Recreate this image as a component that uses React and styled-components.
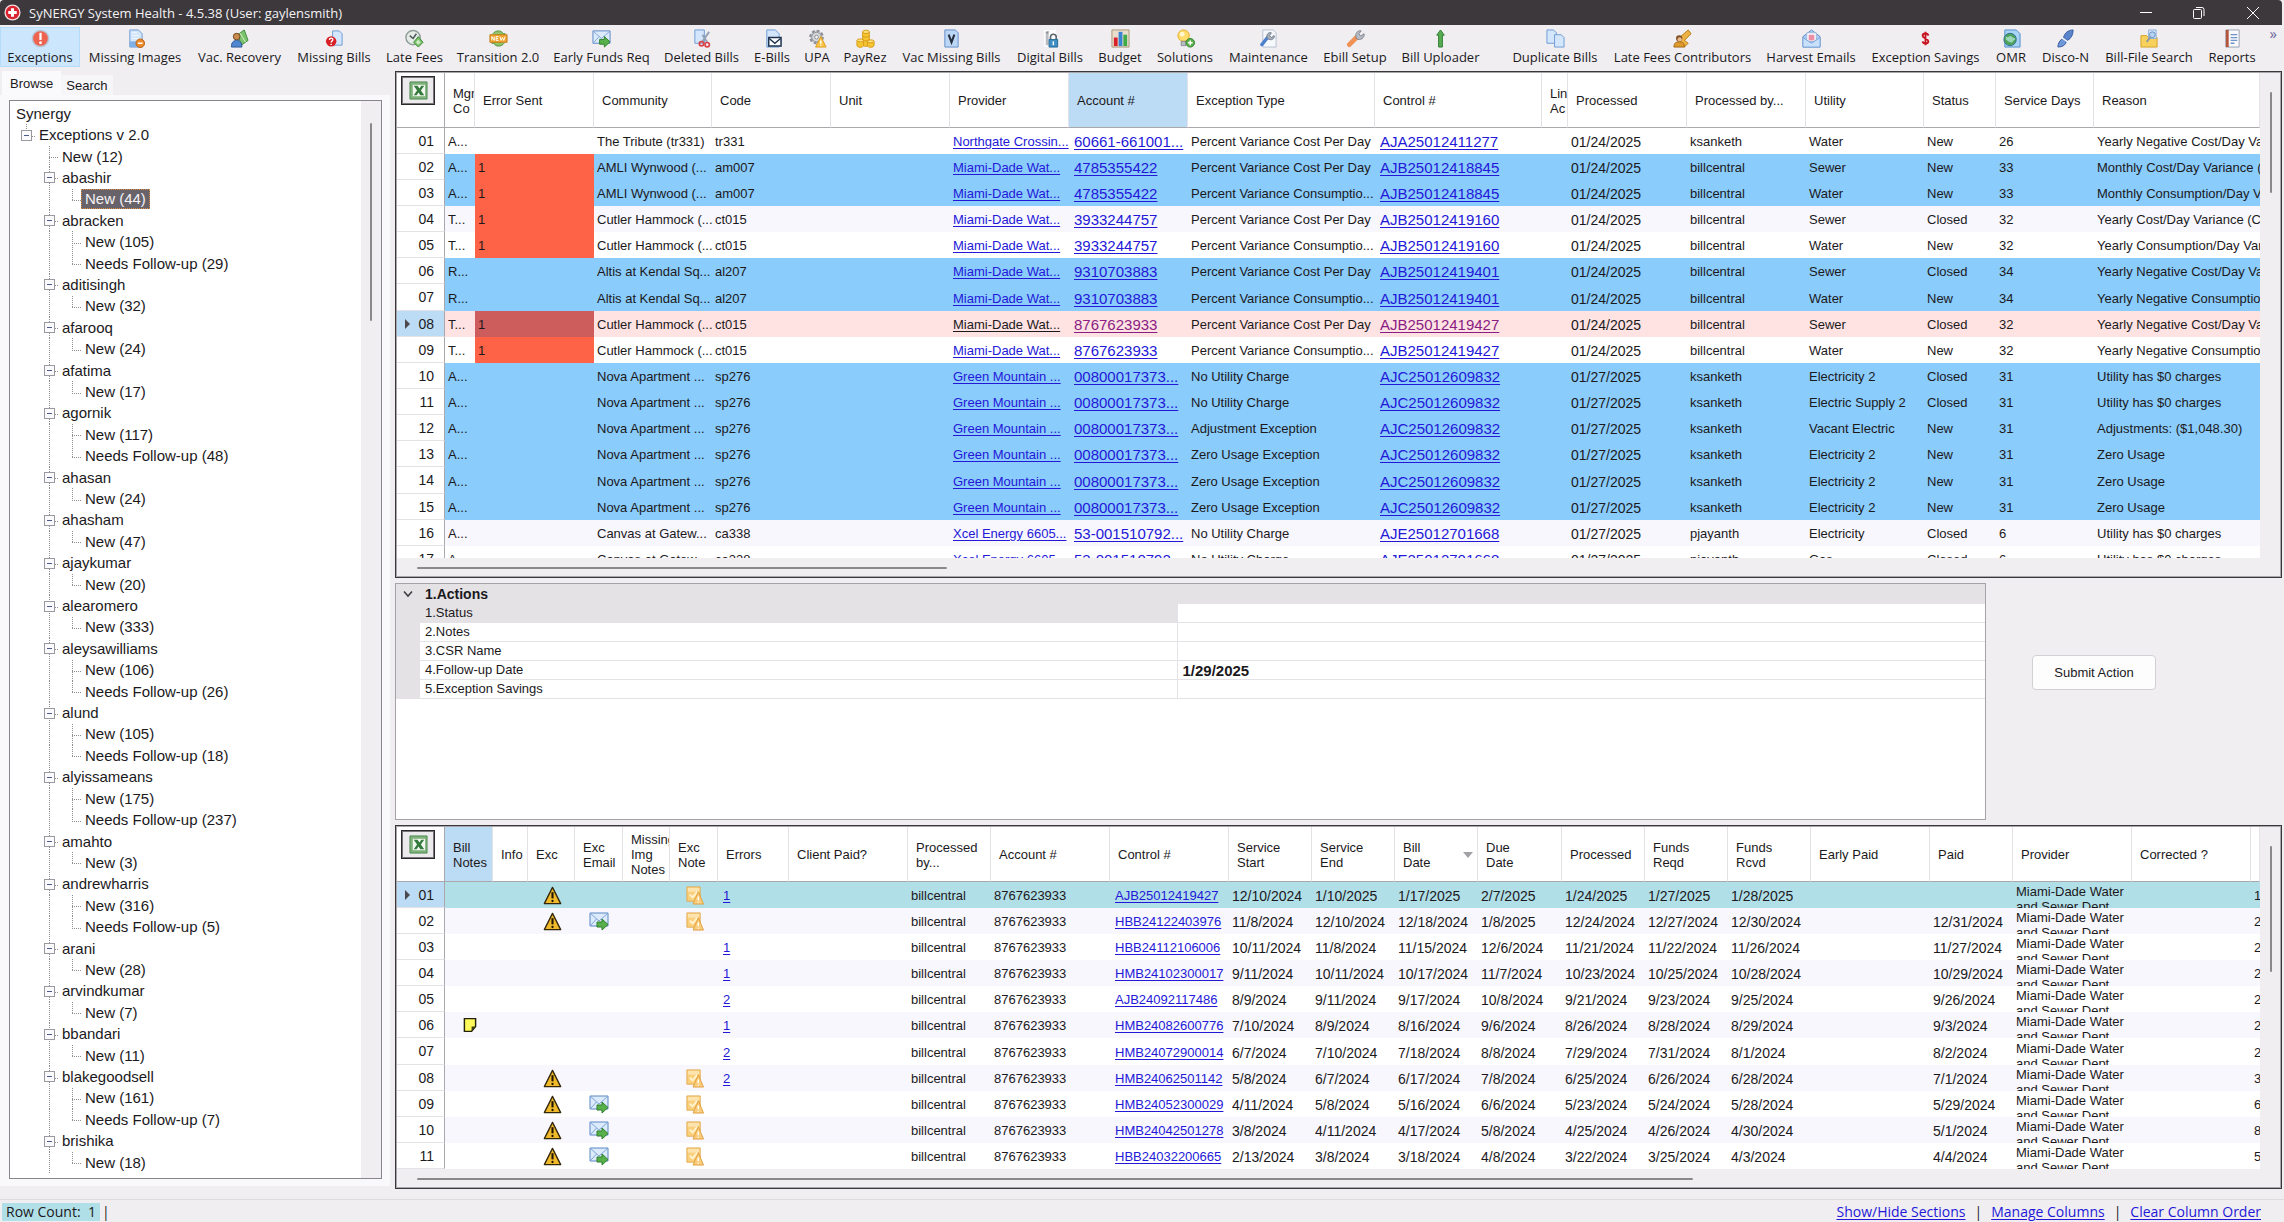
import React, { useState } from 'react';
import styled, { createGlobalStyle, css } from 'styled-components';

const sans = `"Liberation Sans", Arial, sans-serif`;
const ui = `"Open Sans", "Noto Sans", sans-serif`;

const c = {
  chrome: '#f0eef1',
  title: '#3c383c',
  line: '#e4e2e7',
  dark: '#39373a',
  thumb: '#8a888b',
  link: '#2318d8',
  visited: '#8a1c84',
  head: '#bcdbf4',
  sky: '#8accfb',
  pink: '#ffe3e2',
  tomato: '#ff6347',
  indian: '#cd5c5c',
  powder: '#b1dfe7',
  ghost: '#f8f7fd',
};

const GlobalStyle = createGlobalStyle`
  * { box-sizing: border-box; }
  body { margin: 0; background: ${c.chrome}; font-family: ${sans}; font-size: 13px; color: #1b191c; }
  button, input { font: inherit; color: inherit; }
`;

/* ---------- icons ---------- */

const page = (
  <path d="M4 1h9l4 4v14H4z" fill="#d3e6fb" stroke="#6d9bd3" />
);
const Ico = styled.svg.attrs({ viewBox: '0 0 20 20', 'aria-hidden': true })`
  display: block;
  width: ${p => p.$size || 19}px;
  height: ${p => p.$size || 19}px;
  flex: none;
`;
const Warn = () => (
  <g>
    <path d="M10 1.5 18.6 18.5H1.4z" fill="#f0b929" stroke="#33270a" strokeWidth="1.4" strokeLinejoin="round" />
    <path d="M10 6.5v6.5" stroke="#1d1606" strokeWidth="2.2" />
    <circle cx="10" cy="15.8" r="1.2" fill="#1d1606" />
  </g>
);
const MailArrow = () => (
  <g>
    <path d="M1 2h18v13H1z" fill="#dcebfb" stroke="#5b86c4" />
    <path d="M1.5 2.5 10 10l8.5-7.5M1.5 14.5 7.5 8M18.5 14.5 12.5 8" fill="none" stroke="#7fa5d8" />
    <path d="M8 11h5V8l6 5.5-6 5.5v-3H8z" fill="#58b04b" stroke="#2f7f2c" />
  </g>
);
const icons = {
  exceptions: (
    <g>
      <circle cx="10" cy="10" r="8.5" fill="#ee6350" stroke="#b9c3d0" strokeWidth="1.5" />
      <path d="M10 4v7.5" stroke="#fff" strokeWidth="2.4" />
      <circle cx="10" cy="14.5" r="1.5" fill="#fff" />
    </g>
  ),
  missingImages: (
    <g>
      {page}
      <path d="M4 13h13v6H4z" fill="#7fb0e8" />
      <path d="M6 4h6M6 7h8M6 10h8" stroke="#f2f8ff" />
      <circle cx="15" cy="15" r="4.5" fill="#ec8a2b" stroke="#b95f12" />
      <path d="M12.5 15h5" stroke="#fff" strokeWidth="1.6" />
    </g>
  ),
  recovery: (
    <g>
      <path d="M8 6 15 1l4 11-7 5z" fill="#7cc36e" stroke="#3f8a3c" />
      <path d="M10 3.5 16.5 14" stroke="#d8f0cf" />
      <circle cx="7" cy="8" r="3.5" fill="#c98b4d" stroke="#6d4520" />
      <path d="M1.5 19c0-5 2-7 5.5-7s5.5 2 5.5 7z" fill="#4f86cf" stroke="#2c5796" />
    </g>
  ),
  missingBills: (
    <g>
      <path d="M8 2h7l3 3v12H8z" fill="#d3e6fb" stroke="#6d9bd3" />
      <circle cx="6.5" cy="13" r="5.5" fill="#d81f26" />
      <path d="M4.8 11.5c0-2.600 3.600-2.400 3.400 0-.2 1.300-1.700 1.300-1.700 2.700M6.500 15.500v1.300" fill="none" stroke="#fff" strokeWidth="1.5" />
    </g>
  ),
  lateFees: (
    <g>
      <circle cx="8.5" cy="9" r="7.5" fill="#e5ece8" stroke="#8f9d97" strokeWidth="1.5" />
      <path d="M5 7l3.5 3L12 5" fill="none" stroke="#4a5652" strokeWidth="1.5" />
      <path d="m14 8 5 6-5 5-5-5z" fill="#79c06b" stroke="#3f8a3c" />
      <path d="m14 11 2.5 3-2.500 2.500L11.500 14z" fill="#cdeac5" />
    </g>
  ),
  transition: (
    <g>
      <path d="M4 5c3-4 9-4 11 0h2l-3.5 4M16 15c-3 4-9 4-11 0H3l3.5-4" fill="#8fc46a" stroke="#4e8f35" />
      <path d="M1 6h18v8H1z" fill="#f2a531" stroke="#c27a15" />
      <path d="M3 12V8l2.5 4V8M7.5 8v4H10M7.5 8H10M7.500 10h2M11.500 8l1.200 4L14.200 9l1.300 3L17 8" fill="none" stroke="#fff" />
    </g>
  ),
  mailArrow: <MailArrow />,
  deleted: (
    <g>
      <path d="M3 1h10v14H3z" fill="#d3e6fb" stroke="#6d9bd3" />
      <path d="m18 3-7 10M11 6l5 8" stroke="#93a2b5" strokeWidth="2" />
      <circle cx="10" cy="15.5" r="2.3" fill="none" stroke="#d8434a" strokeWidth="1.8" />
      <circle cx="16" cy="16.5" r="2.3" fill="none" stroke="#d8434a" strokeWidth="1.8" />
    </g>
  ),
  ebills: (
    <g>
      {page}
      <path d="M6 9h13v9H6z" fill="#fff" stroke="#1f3350" strokeWidth="1.6" />
      <path d="m6.5 10 6 5 6-5" fill="none" stroke="#1f3350" strokeWidth="1.5" />
    </g>
  ),
  upa: (
    <g>
      <circle cx="9" cy="8.5" r="6.5" fill="#c9ccd0" stroke="#8d9197" strokeWidth="2.4" strokeDasharray="3 2" />
      <circle cx="9" cy="8.5" r="5" fill="#d5d7da" stroke="#92969b" />
      <circle cx="9" cy="8.5" r="2" fill="#f3f2f4" stroke="#8d9197" />
      <path d="m13.5 8 5.5 11H8z" fill="#fbc748" stroke="#de9a17" />
      <path d="M13.5 12v3.5M13.5 16.5v1.200" stroke="#fff" strokeWidth="1.5" />
    </g>
  ),
  payrez: (
    <g fill="#f6c532" stroke="#d59a17">
      <path d="M7 3v13c0 3 7 3 7 0V3z" />
      <ellipse cx="10.5" cy="3" rx="3.5" ry="1.8" fill="#ffe27a" />
      <path d="M1 12v5c0 3 7 3 7 0v-5z" />
      <ellipse cx="4.5" cy="12" rx="3.5" ry="1.6" fill="#ffe27a" />
      <path d="M12 13v4c0 3 7 3 7 0v-4z" />
      <ellipse cx="15.5" cy="13" rx="3.5" ry="1.6" fill="#ffe27a" />
      <path d="M7 7c0 2 7 2 7 0M7 11c0 2 7 2 7 0" fill="none" />
    </g>
  ),
  vac: (
    <g>
      <path d="M3 1h11l3 3v15H3z" fill="#bcd6f5" stroke="#5f8cc9" />
      <path d="m7 6 3 8 3-8" fill="none" stroke="#262f3d" strokeWidth="2.2" />
    </g>
  ),
  digital: (
    <g>
      <path d="M3 1h13v18H3z" fill="#fbfbfc" />
      <path d="M5 5h3v12H5z" fill="#b9bcc1" />
      <path d="M5 3l3-1v3H5z" fill="#8e9298" />
      <path d="M10 11V8.5c0-4 6-4 6 0V11" fill="none" stroke="#5d656f" strokeWidth="1.7" />
      <path d="M8.5 11h9v8h-9z" fill="#3f8fc4" stroke="#226896" />
      <path d="M13 13v4" stroke="#fff" strokeWidth="1.5" />
    </g>
  ),
  budget: (
    <g>
      <path d="M1 1h18v18H1z" fill="#e9ddcb" stroke="#ac9576" />
      <path d="M3 9h4v9H3z" fill="#d9212c" />
      <path d="M8 3h4v15H8z" fill="#3a83d3" />
      <path d="M13 6h4v12h-4z" fill="#3faa4a" />
    </g>
  ),
  solutions: (
    <g>
      <circle cx="8" cy="7" r="6" fill="#ffdc6b" stroke="#e5a927" />
      <circle cx="6.5" cy="5.5" r="2.5" fill="#fff6cf" />
      <path d="M5.5 13h5v4.5h-5z" fill="#b9bdc3" stroke="#868b92" />
      <circle cx="15" cy="14.5" r="4.5" fill="#5bb04c" stroke="#2f7f2c" />
      <path d="M15 12v5M12.5 14.5h5" stroke="#fff" strokeWidth="1.6" />
    </g>
  ),
  maintenance: (
    <g>
      <path d="M4 1h11l3 3v15H4z" fill="#f6f8fc" stroke="#b5bfd1" />
      <path d="M3 16.500 9 9" stroke="#4f80cd" strokeWidth="3.6" strokeLinecap="round" />
      <path d="M9 10c-2-4 1-7 4-6l-2 3 2 2 3-2c1 3-3 6-7 3z" fill="#a8b0bc" stroke="#727c8b" />
    </g>
  ),
  ebill: (
    <g>
      <path d="M3.5 16.5 11 9" stroke="#f09255" strokeWidth="5" strokeLinecap="round" />
      <path d="M11 10c-2-5 1-9 5-8l-2.5 3 2 2.5L19 5c1 4-4 8-8 5z" fill="#b7bcc4" stroke="#7d838d" />
    </g>
  ),
  uploader: (
    <path d="M10 1l4 5.5h-2V19H8V6.5H6z" fill="#59ad50" stroke="#2d7c31" />
  ),
  duplicate: (
    <g fill="#d3e6fb" stroke="#6d9bd3">
      <path d="M1 1h7l3 3v11H1z" />
      <path d="M9 6h7l3 3v10H9z" />
    </g>
  ),
  contributors: (
    <g>
      <path d="M8 8 16 1l3 4-7 7 4 3-4 4-5-4z" fill="#edb242" stroke="#b57c14" />
      <circle cx="6.5" cy="10" r="3.3" fill="#7b4e28" />
      <circle cx="7" cy="11" r="2.3" fill="#e8b98c" />
      <path d="M1 19c0-4 2-5.5 5.5-5.5S12 15 12 19z" fill="#df9a2d" stroke="#9f6512" />
    </g>
  ),
  harvest: (
    <g>
      <path d="M1 8 10 1l9 7v11H1z" fill="#a9cdf6" stroke="#5f8cc9" />
      <path d="M5 4h10v9H5z" fill="#fff" stroke="#9cb4d6" />
      <path d="M7 6h6v6H7z" fill="#ea8fa6" />
      <path d="m1 9 9 6 9-6v10H1z" fill="#c9e0fa" stroke="#7aa3da" />
    </g>
  ),
  savings: (
    <path d="M13 7c-.5-3-6-3-6 0s6 3 6 6-5.5 3.200-6 0M10 3v14" fill="none" stroke="#c81420" strokeWidth="2" />
  ),
  omr: (
    <g>
      <path d="M3 1h12l4 4v14H3z" fill="#a9d4f5" stroke="#4f8ccb" />
      <circle cx="8.5" cy="11" r="6.5" fill="#4fa35a" stroke="#2e6f8f" />
      <path d="M4 8c3 2 4-2 6 0s4 1 4 3c-3 1-2 4-5 3s-3-2-5-3z" fill="#9ad6b8" />
    </g>
  ),
  disco: (
    <g>
      <path d="M18 1c-5 0-9 3-10 8l4 3c4-2 6-6 6-11z" fill="#5a84cc" stroke="#33589e" />
      <path d="M2 19c5 0 8-2 9-6l-4-3c-3 2-5 5-5 9z" fill="#6f97da" stroke="#33589e" />
      <path d="m6 9 7 5" stroke="#eef2fa" strokeWidth="1.5" />
    </g>
  ),
  search: (
    <g>
      <path d="M1 7h6l2 2h9v10H1z" fill="#f8d15c" stroke="#d5a023" />
      <path d="M9 1h8v9H9z" fill="#d3e6fb" stroke="#8dafdc" />
      <circle cx="13" cy="6" r="3" fill="#b7d5f5" stroke="#6b8bb6" />
      <path d="m11 8.5-4 5" stroke="#8c97a8" strokeWidth="2" />
    </g>
  ),
  reports: (
    <g>
      <path d="M3 1h14v18H3z" fill="#f8f8fb" stroke="#96a0b3" />
      <path d="M3 1h3v18H3z" fill="#b3553d" />
      <path d="M8 6h7M8 9h7M8 12h7M8 15h4" stroke="#6f94c9" strokeWidth="1.4" />
    </g>
  ),
};

const ExcelIcon = () => (
  <Ico $size={19}>
    <path d="M1 1h18v18H1z" fill="#7fb27c" stroke="#4c8a4f" />
    <path d="M4 4h13v12H4z" fill="#f1f6ee" />
    <path d="M5 5h4l2 3 2-3h3l-3.500 5L16 15h-4l-2-3-2 3H5l3.500-5z" fill="#357a3d" />
  </Ico>
);
const ExcNoteIcon = () => (
  <Ico $size={19}>
    <path d="M2 1h14v15H2z" fill="#fbd07c" stroke="#e3aa50" />
    <path d="M3 2h12v4H3z" fill="#fde3ae" />
    <path d="M5 9l3 3 5-6" fill="none" stroke="#fff3d0" strokeWidth="2" />
    <path d="m14 6 5.500 13H8.500z" fill="#f9cd7c" stroke="#e0a03f" />
    <path d="M14 11v4M14 16.500v1.200" stroke="#fff" strokeWidth="1.4" />
  </Ico>
);
const BillNoteIcon = () => (
  <Ico $size={16}>
    <path d="M3 2h14v10l-5 6H3z" fill="#fdf95a" stroke="#23220c" strokeWidth="1.8" />
    <path d="M12 18v-6h5z" fill="#3d3b17" />
  </Ico>
);

/* ---------- frame ---------- */

const Window = styled.div`
  display: flex;
  flex-direction: column;
  height: 100vh;
  min-width: 1200px;
  overflow: hidden;
`;
const TitleBar = styled.header`
  display: flex;
  align-items: center;
  height: 25px;
  padding: 0 2px 0 4px;
  margin-right: 2px;
  background: ${c.title};
  border-radius: 4px 4px 0 0;
  color: #f4f2f5;
  font-family: ${ui};
`;
const AppTitle = styled.h1`
  flex: 1;
  margin: 0 0 0 8px;
  font-size: 13px;
  font-weight: 400;
  line-height: 24px;
`;
const WinButton = styled.button`
  display: flex;
  align-items: center;
  justify-content: center;
  width: 54px;
  height: 22px;
  padding: 0;
  border: 0;
  background: none;
`;
const ToolBar = styled.nav`
  display: flex;
  height: 46px;
  padding: 2px 0 4px;
  overflow: hidden;
  font-family: ${ui};
`;
const Tool = styled.button`
  display: flex;
  flex-direction: column;
  align-items: center;
  flex: none;
  width: ${p => p.$w}px;
  margin-left: ${p => (p.$apart ? 17 : 0)}px;
  padding: 1px 0 0;
  border: 1px solid ${p => (p.$on ? '#b5dcfb' : 'transparent')};
  background: ${p => (p.$on ? '#cce6fd' : 'none')};
  font-size: 13px;
  line-height: 18px;
  white-space: nowrap;
`;
const More = styled.button`
  align-self: flex-start;
  margin-left: auto;
  padding: 0 7px 0 0;
  border: 0;
  background: none;
  color: #6c6799;
  font-size: 15px;
  line-height: 12px;
`;
const Main = styled.main`
  flex: 1;
  min-height: 0;
  display: grid;
  grid-template-columns: 390px 1fr;
  gap: 5px;
  padding-right: 2px;
`;

/* ---------- tree ---------- */

const Side = styled.aside`
  display: flex;
  flex-direction: column;
  min-height: 0;
  padding-bottom: 13px;
`;
const Tabs = styled.div`
  display: flex;
  align-items: flex-end;
  height: 24px;
  padding-left: 2px;
`;
const Tab = styled.button`
  height: ${p => (p.$on ? 24 : 20)}px;
  padding: 0 ${p => (p.$on ? 8 : 5)}px;
  border: 0;
  background: ${p => (p.$on ? '#faf9fb' : '#f6f5f8')};
  font-size: 13px;
`;
const TabPage = styled.div`
  flex: 1;
  min-height: 0;
  display: flex;
  padding: 5px 8px 7px 9px;
  background: #f9f8fb;
`;
const TreeBox = styled.div`
  flex: 1;
  display: flex;
  border: 1px solid #87858b;
  background: #fff;
`;
const TreeList = styled.ul`
  flex: 1;
  display: flex;
  flex-direction: column;
  margin: 0;
  padding: 2px 0 5px 5px;
  list-style: none;
  font-size: 15px;
`;
const TreeRow = styled.li`
  flex: 1;
  display: flex;
  align-items: center;
  min-height: 0;
`;
const dotsY = 'repeating-linear-gradient(#8f8d92 0 1px, transparent 1px 2px)';
const dotsX = 'repeating-linear-gradient(90deg, #8f8d92 0 1px, transparent 1px 2px)';
const Rail = styled.span`
  display: flex;
  align-items: center;
  align-self: stretch;
  width: 23px;
  padding-left: 6px;
  background-repeat: no-repeat;
  ${p => p.$kind === 'through' && css`
    background-image: ${dotsY};
    background-size: 1px 100%;
    background-position: 11px 0;
  `}
  ${p => p.$kind === 'branch' && css`
    background-image: ${dotsY}, ${dotsX};
    background-size: 1px 100%, 10px 1px;
    background-position: 11px 0, 11px 55%;
  `}
  ${p => p.$kind === 'corner' && css`
    background-image: ${dotsY}, ${dotsX};
    background-size: 1px 55%, 10px 1px;
    background-position: 11px 0, 11px 55%;
  `}
`;
const Toggle = styled.button`
  display: flex;
  align-items: center;
  justify-content: center;
  width: 11px;
  height: 11px;
  padding: 0;
  border: 1px solid #9b99a0;
  background: #fbfbfd;
  &::before {
    content: '';
    width: 5px;
    height: 1px;
    background: #4d5a8c;
  }
`;
const NodeLabel = styled.span`
  margin-left: -3px;
  padding: 0 3px;
  border: 1px ${p => (p.$on ? 'dotted #d98d45' : 'solid transparent')};
  background: ${p => (p.$on ? '#68636b' : 'none')};
  color: ${p => (p.$on ? '#f5f3f6' : 'inherit')};
  line-height: 18px;
  white-space: nowrap;
`;
const TreeTrack = styled.div`
  display: flex;
  justify-content: center;
  width: 20px;
  padding-top: 22px;
  background: ${c.chrome};
`;

const users = [
  ['abashir', 44], ['abracken', 105, 29], ['aditisingh', 32], ['afarooq', 24], ['afatima', 17],
  ['agornik', 117, 48], ['ahasan', 24], ['ahasham', 47], ['ajaykumar', 20], ['alearomero', 333],
  ['aleysawilliams', 106, 26], ['alund', 105, 18], ['alyissameans', 175, 237], ['amahto', 3],
  ['andrewharris', 316, 5], ['arani', 28], ['arvindkumar', 7], ['bbandari', 11],
  ['blakegoodsell', 161, 7], ['brishika', 18],
];

const Tree = () => {
  const [picked, setPicked] = useState('abashir-new');
  return (
    <TreeList>
      <TreeRow><NodeLabel>Synergy</NodeLabel></TreeRow>
      <TreeRow>
        <Rail $kind="corner"><Toggle aria-label="Collapse Exceptions v 2.0" /></Rail>
        <NodeLabel>Exceptions v 2.0</NodeLabel>
      </TreeRow>
      <TreeRow><Rail /><Rail $kind="branch" /><NodeLabel>New (12)</NodeLabel></TreeRow>
      {users.map(([name, fresh, follow]) => (
        <React.Fragment key={name}>
          <TreeRow>
            <Rail />
            <Rail $kind="branch"><Toggle aria-label={`Collapse ${name}`} /></Rail>
            <NodeLabel>{name}</NodeLabel>
          </TreeRow>
          <TreeRow onClick={() => setPicked(`${name}-new`)}>
            <Rail />
            <Rail $kind="through" />
            <Rail $kind={follow ? 'branch' : 'corner'} />
            <NodeLabel $on={picked === `${name}-new`}>New ({fresh})</NodeLabel>
          </TreeRow>
          {follow && (
            <TreeRow onClick={() => setPicked(`${name}-follow`)}>
              <Rail />
              <Rail $kind="through" />
              <Rail $kind="corner" />
              <NodeLabel $on={picked === `${name}-follow`}>Needs Follow-up ({follow})</NodeLabel>
            </TreeRow>
          )}
        </React.Fragment>
      ))}
    </TreeList>
  );
};

/* ---------- grids ---------- */

const Content = styled.section`
  display: grid;
  grid-template-rows: 507fr 237fr 364fr;
  gap: 5px;
  min-width: 0;
  min-height: 0;
  padding-bottom: 10px;
`;
const Panel = styled.div`
  display: grid;
  grid-template-columns: minmax(0, 1fr) 21px;
  grid-template-rows: minmax(0, 1fr) 19px;
  min-height: 0;
  border: 1px solid ${c.dark};
  outline: 1px solid #a9a7ab;
  outline-offset: -2px;
  background: ${c.chrome};
`;
const VTrack = styled.div`
  display: flex;
  justify-content: center;
  padding-top: 20px;
  background: ${c.chrome};
`;
const HTrack = styled.div`
  display: flex;
  align-items: center;
  padding-left: 21px;
`;
const Thumb = styled.div`
  width: ${p => p.$w || 2}px;
  height: ${p => p.$h || 2}px;
  border-radius: 1px;
  background: ${c.thumb};
`;
const Viewport = styled.div`
  overflow: hidden;
  background: #fff;
`;
const Table = styled.table`
  width: 100%;
  table-layout: fixed;
  border-collapse: separate;
  border-spacing: 0;
`;
const Th = styled.th`
  height: 56px;
  padding: 2px 0 0 8px;
  overflow: hidden;
  border-right: 1px solid ${c.line};
  border-bottom: 1px solid #aaa8ad;
  background: ${p => (p.$on ? c.head : '#fff')};
  font-weight: 400;
  line-height: 15px;
  text-align: left;
  white-space: pre;
`;
const Corner = styled.th`
  height: 56px;
  padding: 4px 0 0 5px;
  border-right: 1px solid #aaa8ad;
  border-bottom: 1px solid #aaa8ad;
  vertical-align: top;
`;
const ExcelButton = styled.button`
  display: flex;
  align-items: center;
  justify-content: center;
  width: 34px;
  height: 29px;
  padding: 0;
  border: 1px solid #2b292c;
  outline: 1px solid #77757a;
  outline-offset: -2px;
  background: #eceaed;
`;
const SortHead = styled.span`
  display: flex;
  align-items: center;
  justify-content: space-between;
  padding-right: 4px;
`;
const SortMark = styled.span`
  border: 5px solid transparent;
  border-top: 6px solid #a3a1a6;
  border-bottom: 0;
`;
const Tr = styled.tr`
  height: 26px;
  background: ${p => p.$bg};
  &:nth-child(7n) { height: 27px; }
`;
const RowHead = styled.th`
  padding: 0 10px 0 0;
  border-right: 1px solid #aaa8ad;
  border-bottom: 1px solid ${c.line};
  background: ${p => (p.$on ? c.head : '#fff')};
  font-size: 14px;
  font-weight: 400;
  line-height: 24px;
`;
const RowHeadInner = styled.span`
  display: flex;
  align-items: center;
  justify-content: flex-end;
  gap: 8px;
`;
const Pointer = styled.span`
  border: 5px solid transparent;
  border-left: 5px solid #4b494d;
  border-right: 0;
`;
const Td = styled.td`
  padding: 2px 0 0 ${p => p.$pad || 3}px;
  overflow: hidden;
  background: ${p => p.$bg || 'transparent'};
  font-size: ${p => p.$fs || 13}px;
  line-height: 24px;
  white-space: nowrap;
`;
const IconTd = styled.td`
  padding: 0 0 0 ${p => p.$pad || 14}px;
`;
const WrapCell = styled.div`
  height: 24px;
  overflow: hidden;
  line-height: 15px;
  white-space: pre;
`;
const GridLink = styled.a`
  color: ${p => p.$color || c.link};
  text-decoration: underline;
  text-underline-offset: 2px;
`;

const Cols = ({ widths }) => (
  <colgroup>
    {widths.map((w, i) => <col key={i} width={w} />)}
    <col />
  </colgroup>
);
const RowNumber = ({ n, on }) => (
  <RowHead scope="row" $on={on}>
    <RowHeadInner>{on && <Pointer />}{String(n).padStart(2, '0')}</RowHeadInner>
  </RowHead>
);
const ExcelCorner = () => (
  <Corner><ExcelButton aria-label="Export to Excel"><ExcelIcon /></ExcelButton></Corner>
);

const topCols = [49, 30, 119, 118, 119, 119, 119, 119, 187, 167, 26, 119, 119, 118, 72, 98];
const topHeads = [
  'Mgmt\nCo', 'Error Sent', 'Community', 'Code', 'Unit', 'Provider', 'Account #', 'Exception Type',
  'Control #', 'Lin\nAc', 'Processed', 'Processed by...', 'Utility', 'Status', 'Service Days', 'Reason',
];
const MD = 'Miami-Dade Wat...';
const GM = 'Green Mountain ...';
const CPD = 'Percent Variance Cost Per Day';
const CON = 'Percent Variance Consumptio...';
const BC = 'billcentral';
// tone, company, error, community, code, provider, account, type, control, day, by, utility, status, days, reason
const topRows = [
  ['', 'A...', '', 'The Tribute (tr331)', 'tr331', 'Northgate Crossin...', '60661-661001...', CPD, 'AJA25012411277', 24, 'ksanketh', 'Water', 'New', 26, 'Yearly Negative Cost/Day Variance'],
  ['sky', 'A...', 1, 'AMLI Wynwood (...', 'am007', MD, '4785355422', CPD, 'AJB25012418845', 24, BC, 'Sewer', 'New', 33, 'Monthly Cost/Day Variance (CY'],
  ['sky', 'A...', 1, 'AMLI Wynwood (...', 'am007', MD, '4785355422', CON, 'AJB25012418845', 24, BC, 'Water', 'New', 33, 'Monthly Consumption/Day Variance'],
  ['', 'T...', 1, 'Cutler Hammock (...', 'ct015', MD, '3933244757', CPD, 'AJB25012419160', 24, BC, 'Sewer', 'Closed', 32, 'Yearly Cost/Day Variance (CY'],
  ['', 'T...', 1, 'Cutler Hammock (...', 'ct015', MD, '3933244757', CON, 'AJB25012419160', 24, BC, 'Water', 'New', 32, 'Yearly Consumption/Day Variance'],
  ['sky', 'R...', '', 'Altis at Kendal Sq...', 'al207', MD, '9310703883', CPD, 'AJB25012419401', 24, BC, 'Sewer', 'Closed', 34, 'Yearly Negative Cost/Day Variance'],
  ['sky', 'R...', '', 'Altis at Kendal Sq...', 'al207', MD, '9310703883', CON, 'AJB25012419401', 24, BC, 'Water', 'New', 34, 'Yearly Negative Consumption/Day'],
  ['pink', 'T...', 1, 'Cutler Hammock (...', 'ct015', MD, '8767623933', CPD, 'AJB25012419427', 24, BC, 'Sewer', 'Closed', 32, 'Yearly Negative Cost/Day Variance'],
  ['', 'T...', 1, 'Cutler Hammock (...', 'ct015', MD, '8767623933', CON, 'AJB25012419427', 24, BC, 'Water', 'New', 32, 'Yearly Negative Consumption/Day'],
  ['sky', 'A...', '', 'Nova Apartment ...', 'sp276', GM, '00800017373...', 'No Utility Charge', 'AJC25012609832', 27, 'ksanketh', 'Electricity 2', 'Closed', 31, 'Utility has $0 charges'],
  ['sky', 'A...', '', 'Nova Apartment ...', 'sp276', GM, '00800017373...', 'No Utility Charge', 'AJC25012609832', 27, 'ksanketh', 'Electric Supply 2', 'Closed', 31, 'Utility has $0 charges'],
  ['sky', 'A...', '', 'Nova Apartment ...', 'sp276', GM, '00800017373...', 'Adjustment Exception', 'AJC25012609832', 27, 'ksanketh', 'Vacant Electric', 'New', 31, 'Adjustments: ($1,048.30)'],
  ['sky', 'A...', '', 'Nova Apartment ...', 'sp276', GM, '00800017373...', 'Zero Usage Exception', 'AJC25012609832', 27, 'ksanketh', 'Electricity 2', 'New', 31, 'Zero Usage'],
  ['sky', 'A...', '', 'Nova Apartment ...', 'sp276', GM, '00800017373...', 'Zero Usage Exception', 'AJC25012609832', 27, 'ksanketh', 'Electricity 2', 'New', 31, 'Zero Usage'],
  ['sky', 'A...', '', 'Nova Apartment ...', 'sp276', GM, '00800017373...', 'Zero Usage Exception', 'AJC25012609832', 27, 'ksanketh', 'Electricity 2', 'New', 31, 'Zero Usage'],
  ['', 'A...', '', 'Canvas at Gatew...', 'ca338', 'Xcel Energy 6605...', '53-001510792...', 'No Utility Charge', 'AJE25012701668', 27, 'pjayanth', 'Electricity', 'Closed', 6, 'Utility has $0 charges'],
  ['', 'A...', '', 'Canvas at Gatew...', 'ca338', 'Xcel Energy 6605...', '53-001510792...', 'No Utility Charge', 'AJE25012701668', 27, 'pjayanth', 'Gas', 'Closed', 6, 'Utility has $0 charges'],
];

const ExceptionGrid = () => (
  <Panel>
    <Viewport>
      <Table>
        <Cols widths={topCols} />
        <thead>
          <tr>
            <ExcelCorner />
            {topHeads.map(h => <Th key={h} $on={h === 'Account #'}>{h}</Th>)}
          </tr>
        </thead>
        <tbody>
          {topRows.map((r, i) => {
            const [tone, co, err, community, code, provider, account, type, control, day, by, utility, status, days, reason] = r;
            const on = tone === 'pink';
            const errBg = err ? (on ? c.indian : c.tomato) : undefined;
            return (
              <Tr key={i} $bg={tone ? c[tone] : i % 2 ? c.ghost : '#fff'}>
                <RowNumber n={i + 1} on={on} />
                <Td>{co}</Td>
                <Td $bg={errBg}>{err}</Td>
                <Td>{community}</Td>
                <Td>{code}</Td>
                <Td />
                <Td><GridLink href="#provider" $color={on && '#1b191c'}>{provider}</GridLink></Td>
                <Td $fs={15} $pad={5}><GridLink href="#account" $color={on && c.visited}>{account}</GridLink></Td>
                <Td>{type}</Td>
                <Td $fs={15} $pad={5}><GridLink href="#control" $color={on && c.visited}>{control}</GridLink></Td>
                <Td />
                <Td $fs={14}>01/{day}/2025</Td>
                <Td>{by}</Td>
                <Td>{utility}</Td>
                <Td>{status}</Td>
                <Td>{days}</Td>
                <Td>{reason}</Td>
              </Tr>
            );
          })}
        </tbody>
      </Table>
    </Viewport>
    <VTrack><Thumb $h={101} /></VTrack>
    <HTrack><Thumb $w={530} /></HTrack>
  </Panel>
);

const billCols = [49, 48, 35, 47, 48, 47, 48, 71, 119, 83, 119, 119, 83, 83, 83, 84, 83, 83, 83, 119, 83, 119, 119];
const billHeads = [
  'Bill\nNotes', 'Info', 'Exc', 'Exc\nEmail', 'Missing\nImg\nNotes', 'Exc\nNote', 'Errors', 'Client Paid?',
  'Processed\nby...', 'Account #', 'Control #', 'Service\nStart', 'Service\nEnd', 'Bill\nDate', 'Due\nDate',
  'Processed', 'Funds\nReqd', 'Funds\nRcvd', 'Early Paid', 'Paid', 'Provider', 'Corrected ?', ' ',
];
// flags: w warning, m mail, n note, b bill note
const billRows = [
  ['wn', 1, 'AJB25012419427', '12/10/2024', '1/10/2025', '1/17/2025', '2/7/2025', '1/24/2025', '1/27/2025', '1/28/2025', '', 1],
  ['wmn', '', 'HBB24122403976', '11/8/2024', '12/10/2024', '12/18/2024', '1/8/2025', '12/24/2024', '12/27/2024', '12/30/2024', '12/31/2024', 2],
  ['', 1, 'HBB24112106006', '10/11/2024', '11/8/2024', '11/15/2024', '12/6/2024', '11/21/2024', '11/22/2024', '11/26/2024', '11/27/2024', 2],
  ['', 1, 'HMB24102300017', '9/11/2024', '10/11/2024', '10/17/2024', '11/7/2024', '10/23/2024', '10/25/2024', '10/28/2024', '10/29/2024', 2],
  ['', 2, 'AJB24092117486', '8/9/2024', '9/11/2024', '9/17/2024', '10/8/2024', '9/21/2024', '9/23/2024', '9/25/2024', '9/26/2024', 2],
  ['b', 1, 'HMB24082600776', '7/10/2024', '8/9/2024', '8/16/2024', '9/6/2024', '8/26/2024', '8/28/2024', '8/29/2024', '9/3/2024', 2],
  ['', 2, 'HMB24072900014', '6/7/2024', '7/10/2024', '7/18/2024', '8/8/2024', '7/29/2024', '7/31/2024', '8/1/2024', '8/2/2024', 2],
  ['wn', 2, 'HMB24062501142', '5/8/2024', '6/7/2024', '6/17/2024', '7/8/2024', '6/25/2024', '6/26/2024', '6/28/2024', '7/1/2024', 3],
  ['wmn', '', 'HMB24052300029', '4/11/2024', '5/8/2024', '5/16/2024', '6/6/2024', '5/23/2024', '5/24/2024', '5/28/2024', '5/29/2024', 6],
  ['wmn', '', 'HMB24042501278', '3/8/2024', '4/11/2024', '4/17/2024', '5/8/2024', '4/25/2024', '4/26/2024', '4/30/2024', '5/1/2024', 8],
  ['wmn', '', 'HBB24032200665', '2/13/2024', '3/8/2024', '3/18/2024', '4/8/2024', '3/22/2024', '3/25/2024', '4/3/2024', '4/4/2024', 5],
];

const BillGrid = () => (
  <Panel>
    <Viewport>
      <Table>
        <Cols widths={billCols} />
        <thead>
          <tr>
            <ExcelCorner />
            {billHeads.map(h => (
              <Th key={h} $on={h.startsWith('Bill\nN')}>
                {h === 'Bill\nDate' ? <SortHead>{h}<SortMark /></SortHead> : h}
              </Th>
            ))}
          </tr>
        </thead>
        <tbody>
          {billRows.map(([flags, errors, control, ...rest], i) => {
            const dates = rest.slice(0, 7);
            const [paid, tail] = rest.slice(7);
            return (
              <Tr key={control} $bg={i === 0 ? c.powder : i % 2 ? c.ghost : '#fff'}>
                <RowNumber n={i + 1} on={i === 0} />
                <IconTd $pad={17}>{flags.includes('b') && <BillNoteIcon />}</IconTd>
                <Td />
                <IconTd $pad={15}>{flags.includes('w') && <Ico $size={19}><Warn /></Ico>}</IconTd>
                <IconTd>{flags.includes('m') && <Ico $size={20}><MailArrow /></Ico>}</IconTd>
                <Td />
                <IconTd $pad={15}>{flags.includes('n') && <ExcNoteIcon />}</IconTd>
                <Td $pad={5}>{errors && <GridLink href="#errors">{errors}</GridLink>}</Td>
                <Td />
                <Td>{BC}</Td>
                <Td>8767623933</Td>
                <Td $pad={5}><GridLink href="#control">{control}</GridLink></Td>
                {dates.map((d, k) => <Td key={k} $fs={14}>{d}</Td>)}
                <Td />
                <Td $fs={14}>{paid}</Td>
                <Td><WrapCell>{'Miami-Dade Water\nand Sewer Dept'}</WrapCell></Td>
                <Td />
                <Td>{tail}</Td>
              </Tr>
            );
          })}
        </tbody>
      </Table>
    </Viewport>
    <VTrack><Thumb $h={126} /></VTrack>
    <HTrack><Thumb $w={1276} /></HTrack>
  </Panel>
);

/* ---------- actions ---------- */

const ActionArea = styled.form`
  display: grid;
  grid-template-columns: minmax(0, 1fr) 296px;
  min-height: 0;
`;
const PropBox = styled.div`
  border: 1px solid #a5a3a8;
  background: #fff;
`;
const PropHead = styled.div`
  display: grid;
  grid-template-columns: 24px 1fr;
  align-items: center;
  height: 20px;
  background: #e4e2e5;
  font-size: 14px;
  font-weight: 700;
`;
const FoldButton = styled.button`
  display: flex;
  justify-content: center;
  padding: 0;
  border: 0;
  background: none;
`;
const HeadText = styled.span`
  padding-left: 5px;
`;
const PropRow = styled.div`
  display: grid;
  grid-template-columns: 757fr 807fr;
  height: 19px;
  border-left: 24px solid #e4e2e5;
`;
const PropLabel = styled.label`
  padding-left: 5px;
  border-bottom: 1px solid ${c.line};
  background: ${p => (p.$on ? '#e4e2e5' : '#fff')};
  line-height: 18px;
`;
const PropInput = styled.input`
  min-width: 0;
  padding: 0 4px;
  border: 0;
  border-left: 1px solid ${c.line};
  border-bottom: 1px solid ${c.line};
  background: #fff;
  font-size: 15px;
  font-weight: 700;
`;
const SubmitSide = styled.div`
  padding: 72px 0 0 46px;
`;
const Submit = styled.button`
  width: 124px;
  height: 35px;
  border: 1px solid #d2d0d4;
  border-radius: 4px;
  background: #fdfdfe;
`;

const actionFields = [
  ['1.Status', ''], ['2.Notes', ''], ['3.CSR Name', ''], ['4.Follow-up Date', '1/29/2025'], ['5.Exception Savings', ''],
];
const Actions = () => (
  <ActionArea onSubmit={e => e.preventDefault()}>
    <PropBox>
      <PropHead>
        <FoldButton type="button" aria-label="Collapse actions">
          <svg width="10" height="8" viewBox="0 0 10 8"><path d="m1 1.5 4 4.5 4-4.5" fill="none" stroke="#3b393d" strokeWidth="1.5" /></svg>
        </FoldButton>
        <HeadText>1.Actions</HeadText>
      </PropHead>
      {actionFields.map(([label, value], i) => (
        <PropRow key={label}>
          <PropLabel htmlFor={`action${i}`} $on={i === 0}>{label}</PropLabel>
          <PropInput id={`action${i}`} defaultValue={value} />
        </PropRow>
      ))}
    </PropBox>
    <SubmitSide><Submit type="submit">Submit Action</Submit></SubmitSide>
  </ActionArea>
);

/* ---------- footer ---------- */

const StatusBar = styled.footer`
  display: flex;
  align-items: center;
  gap: 2px;
  height: 23px;
  padding: 2px 23px 0 2px;
  border-top: 1px solid #dddbde;
  font-family: ${ui};
  font-size: 14px;
  line-height: 18px;
`;
const RowCount = styled.span`
  padding: 0 4px;
  background: ${c.powder};
  white-space: pre;
`;
const FootLinks = styled.nav`
  display: flex;
  gap: 9px;
  margin-left: auto;
`;

const tools = [
  ['Exceptions', 'exceptions', 80], ['Missing Images', 'missingImages', 110], ['Vac. Recovery', 'recovery', 99],
  ['Missing Bills', 'missingBills', 90], ['Late Fees', 'lateFees', 71], ['Transition 2.0', 'transition', 96],
  ['Early Funds Req', 'mailArrow', 111], ['Deleted Bills', 'deleted', 89], ['E-Bills', 'ebills', 52],
  ['UPA', 'upa', 38], ['PayRez', 'payrez', 58], ['Vac Missing Bills', 'vac', 115], ['Digital Bills', 'digital', 82],
  ['Budget', 'budget', 58], ['Solutions', 'solutions', 72], ['Maintenance', 'maintenance', 95],
  ['Ebill Setup', 'ebill', 78], ['Bill Uploader', 'uploader', 93], ['Duplicate Bills', 'duplicate', 102, true],
  ['Late Fees Contributors', 'contributors', 153], ['Harvest Emails', 'harvest', 104],
  ['Exception Savings', 'savings', 125], ['OMR', 'omr', 46], ['Disco-N', 'disco', 63],
  ['Bill-File Search', 'search', 104], ['Reports', 'reports', 62],
];

const App = () => {
  const [tool, setTool] = useState('Exceptions');
  const [tab, setTab] = useState('Browse');
  return (
    <Window>
      <GlobalStyle />
      <TitleBar>
        <Ico $size={17}>
          <circle cx="10" cy="10" r="9.5" fill="#f3dfe1" />
          <circle cx="10" cy="10" r="8" fill="#d9232e" />
          <path d="M8.2 5h3.600v3.200H15v3.600h-3.200V15H8.200v-3.200H5V8.200h3.200z" fill="#fff" />
        </Ico>
        <AppTitle>SyNERGY System Health - 4.5.38 (User: gaylensmith)</AppTitle>
        <WinButton aria-label="Minimize"><svg width="13" height="13"><path d="M1 6.5h12" stroke="#fff" /></svg></WinButton>
        <WinButton aria-label="Restore">
          <svg width="14" height="14" fill="none" stroke="#fff"><rect x="1.5" y="3.5" width="8" height="9" rx="1" /><path d="M4 1.5h6a2 2 0 0 1 2 2V10" /></svg>
        </WinButton>
        <WinButton aria-label="Close"><svg width="14" height="14"><path d="m1 1 12 12M13 1 1 13" stroke="#fff" /></svg></WinButton>
      </TitleBar>
      <ToolBar>
        {tools.map(([name, icon, w, apart]) => (
          <Tool key={name} $w={w} $apart={apart} $on={tool === name} onClick={() => setTool(name)}>
            <Ico>{icons[icon]}</Ico>
            {name}
          </Tool>
        ))}
        <More aria-label="More tools">»</More>
      </ToolBar>
      <Main>
        <Side>
          <Tabs role="tablist">
            {['Browse', 'Search'].map(t => (
              <Tab key={t} role="tab" aria-selected={tab === t} $on={tab === t} onClick={() => setTab(t)}>{t}</Tab>
            ))}
          </Tabs>
          <TabPage>
            <TreeBox>
              <Tree />
              <TreeTrack><Thumb $h={198} /></TreeTrack>
            </TreeBox>
          </TabPage>
        </Side>
        <Content>
          <ExceptionGrid />
          <Actions />
          <BillGrid />
        </Content>
      </Main>
      <StatusBar>
        <RowCount>Row Count:  1</RowCount>
        |
        <FootLinks>
          <GridLink href="#sections">Show/Hide Sections</GridLink>
          |
          <GridLink href="#columns">Manage Columns</GridLink>
          |
          <GridLink href="#order">Clear Column Order</GridLink>
        </FootLinks>
      </StatusBar>
    </Window>
  );
};

export default App;
